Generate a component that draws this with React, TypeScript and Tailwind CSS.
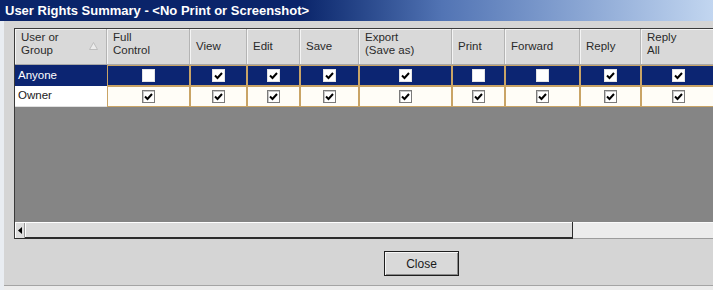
import React from "react";

type Col = { label: string[]; w: string };

const cols: Col[] = [
  { label: ["Full", "Control"], w: "w-[83px]" },
  { label: ["View"], w: "w-[57px]" },
  { label: ["Edit"], w: "w-[53px]" },
  { label: ["Save"], w: "w-[59px]" },
  { label: ["Export", "(Save as)"], w: "w-[93px]" },
  { label: ["Print"], w: "w-[53px]" },
  { label: ["Forward"], w: "w-[75px]" },
  { label: ["Reply"], w: "w-[61px]" },
  { label: ["Reply", "All"], w: "w-[75px]" },
];

const rows = [
  { name: "Anyone", selected: true, rights: [false, true, true, true, true, false, false, true, true] },
  { name: "Owner", selected: false, rights: [true, true, true, true, true, true, true, true, true] },
];

const Check = ({ checked, selected }: { checked: boolean; selected: boolean }) => (
  <span
    className={`flex h-[13px] w-[13px] items-center justify-center bg-white ${
      selected ? "border border-[#e4e4e4]" : "border border-[#7a7a7a] shadow-[inset_1px_1px_0_#c8c8c8]"
    }`}
  >
    {checked && (
      <svg width="9" height="8" viewBox="0 0 9 8">
        <path d="M1 3.5 L3.5 6 L8 1" fill="none" stroke="#000" strokeWidth="2" />
      </svg>
    )}
  </span>
);

const App: React.FC = () => {
  return (
    <div
      className="flex h-[290px] w-[713px] flex-col overflow-hidden bg-[#d5d5d5] text-[11.5px] text-[#1a1a1a]"
      style={{ fontFamily: '"Liberation Sans", Arial, sans-serif' }}
    >
      {/* Title bar */}
      <div className="flex h-[21px] shrink-0 items-center bg-gradient-to-r from-[#0a246a] from-42% via-[#5274b4] via-62% to-[#c2d6f0] pl-[5px]">
        <span className="text-[13px] font-bold text-white">User Rights Summary - &lt;No Print or Screenshot&gt;</span>
      </div>

      <div className="flex flex-1 flex-col border-l-[4px] border-[#e9edf2]">
        {/* Grid */}
        <div className="ml-[10px] mt-[7px] flex h-[211px] flex-col border-l border-t border-[#3a3a3a]">
          {/* Header */}
          <div className="flex h-[36px] shrink-0 border-b border-[#a8a8a8] bg-[#d9d9d9] text-[#2a2a2a]">
            <div className="flex w-[92px] shrink-0 items-center justify-between border-r border-[#b4b4b4] pb-[5px] pl-[6px] pr-[8px] shadow-[inset_1px_1px_0_#f4f4f4]">
              <span className="leading-[13px]">
                User or
                <br />
                Group
              </span>
              <svg width="9" height="8" viewBox="0 0 9 8" className="mt-[4px]">
                <path d="M4.5 0.5 L8.5 7.5 L0.5 7.5 Z" fill="#ececec" stroke="#bdbdbd" strokeWidth="1" />
              </svg>
            </div>
            {cols.map((c) => (
              <div
                key={c.label.join(" ")}
                className={`flex ${c.w} shrink-0 items-center border-r border-[#b4b4b4] pl-[6px] shadow-[inset_1px_1px_0_#f4f4f4] ${
                  c.label.length > 1 ? "pb-[5px]" : ""
                }`}
              >
                <span className="leading-[13px]">
                  {c.label[0]}
                  {c.label[1] && (
                    <>
                      <br />
                      {c.label[1]}
                    </>
                  )}
                </span>
              </div>
            ))}
          </div>

          {/* Rows */}
          {rows.map((r) => (
            <div key={r.name} className="flex h-[21px] shrink-0">
              <div
                className={`flex w-[92px] shrink-0 items-center pl-[3px] ${
                  r.selected ? "bg-[#0c2572] text-white" : "border-b border-[#e0e0e0] bg-white text-[#1a1a1a]"
                }`}
              >
                {r.name}
              </div>
              {cols.map((c, i) => (
                <div
                  key={c.label.join(" ")}
                  className={`flex ${c.w} shrink-0 items-center justify-center border border-[#c9a466] ${
                    r.selected ? "bg-[#0c2572]" : "bg-[#fffdf7]"
                  }`}
                >
                  <Check checked={r.rights[i]} selected={r.selected} />
                </div>
              ))}
            </div>
          ))}

          {/* Empty area */}
          <div className="flex-1 bg-[#858585]" />

          {/* Horizontal scrollbar */}
          <div className="flex h-[17px] shrink-0">
            <div className="flex w-[10px] shrink-0 items-center justify-center border-b border-[#2c2c2c] bg-[#dedede] shadow-[inset_1px_1px_0_#fff,inset_-1px_0_0_#9a9a9a]">
              <svg width="4" height="7" viewBox="0 0 4 7">
                <path d="M4 0 L0 3.5 L4 7 Z" fill="#000" />
              </svg>
            </div>
            <div className="w-[548px] shrink-0 border-b-2 border-r border-[#2c2c2c] bg-[#dcdcdc] shadow-[inset_1px_1px_0_#fff]" />
            <div className="flex-1 border-b border-[#9c9c9c] bg-[#ececec] shadow-[inset_0_1px_0_#fafafa]" />
          </div>
        </div>

        {/* Buttons */}
        <div className="mt-[12px] flex pl-[380px]">
          <button className="flex h-[25px] w-[75px] items-center justify-center border border-[#1e1e1e] bg-[#d9d9d9] text-[12px] text-[#1a1a1a] shadow-[inset_1px_1px_0_#f6f6f6,inset_-1px_-1px_0_#8a8a8a]">
            Close
          </button>
        </div>

        <div className="mt-auto h-[5px] border-t border-[#a4a4a4] bg-[#ececec]" />
      </div>
    </div>
  );
};

export default App;
